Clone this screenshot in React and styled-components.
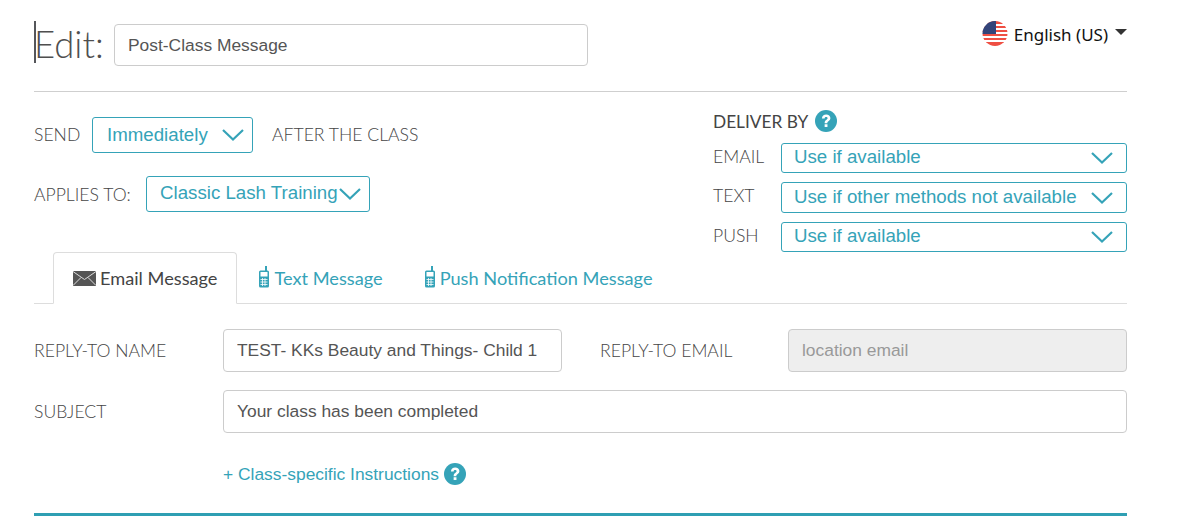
import React from 'react';
import styled, { createGlobalStyle } from 'styled-components';

const teal = '#35a3b8';

const GlobalStyle = createGlobalStyle`
  html, body {
    margin: 0;
    padding: 0;
    background: #fff;
  }
  * {
    box-sizing: border-box;
  }
`;

const Page = styled.div`
    width: 1188px;
    height: 516px;
    overflow: hidden;
    padding: 0 61px 0 34px;
    font-family: 'Lato', 'Liberation Sans', sans-serif;
    color: #4d4d4d;
  `,
  Header = styled.div`
    display: flex;
    justify-content: space-between;
    height: 92px;
    padding-top: 24px;
    border-bottom: 1px solid #cfcfcf;
  `,
  TitleGroup = styled.div`
    display: flex;
    align-items: flex-start;
  `,
  Title = styled.h1`
    width: 80px;
    height: 42px;
    margin: -3px 0 0;
    font-size: 36.5px;
    font-weight: 300;
    line-height: 46px;
    color: #4f4f4f;
    box-shadow: inset 2px 0 0 #55565a;
  `,
  TextInput = styled.input`
    display: block;
    width: ${p => p.$width};
    height: ${p => p.$height || '43px'};
    padding: 0 13px;
    border: 1px solid #cccccc;
    border-radius: 4px;
    background: ${p => (p.disabled ? '#eeeeee' : '#fff')};
    font-family: 'Liberation Sans', Arial, sans-serif;
    font-size: 17.4px;
    color: #555555;
    outline: none;
    &::placeholder {
      color: #999999;
      opacity: 1;
    }
  `,
  LangPicker = styled.div`
    display: flex;
    align-items: center;
    height: 24px;
    margin-top: -3px;
    font-family: 'Noto Sans', sans-serif;
    font-size: 17px;
    color: #111;
  `,
  LangText = styled.span`
    margin: 2px 0 0 6px;
  `,
  Caret = styled.span`
    width: 0;
    height: 0;
    margin: -2px 0 0 7px;
    border-left: 6px solid transparent;
    border-right: 6px solid transparent;
    border-top: 6px solid #333;
  `,
  Settings = styled.div`
    display: flex;
    justify-content: space-between;
    height: 160px;
  `,
  SendColumn = styled.div`
    display: flex;
    flex-direction: column;
    gap: 23px;
    padding-top: 25px;
  `,
  InlineRow = styled.div`
    display: flex;
    align-items: center;
  `,
  Label = styled.span`
    width: ${p => p.$width || 'auto'};
    margin-left: ${p => p.$left || 0};
    padding-bottom: ${p => p.$lift || '2px'};
    flex: none;
    font-size: 17.6px;
    font-weight: 300;
    color: #454545;
    white-space: nowrap;
  `,
  SelectBox = styled.div`
    display: flex;
    align-items: center;
    justify-content: space-between;
    width: ${p => p.$width};
    height: ${p => p.$height};
    padding: 0 ${p => p.$right || '7px'} 0 ${p => p.$left || '12px'};
    border: 1px solid ${teal};
    border-radius: 3px;
    font-family: 'Liberation Sans', Arial, sans-serif;
    font-size: 18.7px;
    color: ${teal};
    white-space: nowrap;
  `,
  SelectText = styled.span`
    margin-bottom: ${p => p.$lift || 0};
  `,
  DeliverColumn = styled.div`
    width: 414px;
    padding-top: 17px;
  `,
  DeliverTitle = styled.div`
    display: flex;
    align-items: center;
    gap: 7px;
    height: 24px;
    margin-bottom: 10px;
    font-size: 17.3px;
    font-weight: 400;
    color: #444;
  `,
  DeliverRows = styled.div`
    display: flex;
    flex-direction: column;
    gap: 9px;
  `,
  DeliverRow = styled.div`
    display: flex;
    align-items: center;
  `,
  TabBar = styled.div`
    display: flex;
    align-items: flex-start;
    height: 52px;
    padding-left: 19px;
    border-bottom: 1px solid #dddddd;
  `,
  Tab = styled.div`
    display: flex;
    align-items: center;
    height: ${p => (p.$active ? '52px' : '51px')};
    padding: 0 19px 0 ${p => (p.$active ? '19px' : '20px')};
    border: 1px solid ${p => (p.$active ? '#dddddd' : 'transparent')};
    border-bottom: 1px solid ${p => (p.$active ? '#fff' : 'transparent')};
    border-radius: 4px 4px 0 0;
    background: #fff;
    font-size: 18.2px;
    font-weight: 400;
    color: ${p => (p.$active ? '#444' : teal)};
    white-space: nowrap;
  `,
  TabIcon = styled.svg`
    flex: none;
    margin: ${p => p.$top || 0} 4px 0 0;
  `,
  Form = styled.div`
    display: flex;
    flex-direction: column;
    gap: 18px;
    padding-top: 25px;
  `,
  FormRow = styled.div`
    display: flex;
    align-items: center;
  `,
  LinkRow = styled.div`
    display: flex;
    align-items: center;
    gap: 5px;
    height: 22px;
    margin: 30px 0 0 189px;
    font-family: 'Liberation Sans', Arial, sans-serif;
    font-size: 17.4px;
    color: ${teal};
  `,
  BottomRule = styled.div`
    height: 3px;
    margin-top: 28px;
    background: #2f9fb3;
  `;

const Chevron = () => (
  <svg width="24" height="14" viewBox="0 0 24 14" fill="none">
    <path d="M2 2 L12 11.5 L22 2" stroke={teal} strokeWidth="2.2" />
  </svg>
);

const Help = () => (
  <svg width="22" height="22" viewBox="0 0 21 21">
    <circle cx="10.5" cy="10.5" r="10.5" fill={teal} />
    <path
      d="M6.6 8 C6.7 5.7 8.4 4.2 10.7 4.2 C13 4.2 14.7 5.6 14.7 7.7 C14.7 9.2 13.9 10 12.8 10.7 C12 11.2 11.8 11.6 11.8 12.6 L9.2 12.6 C9.2 11 9.6 10.2 10.7 9.5 C11.5 8.9 12 8.5 12 7.9 C12 7.1 11.5 6.7 10.7 6.7 C9.8 6.7 9.3 7.2 9.2 8 Z"
      fill="#fff"
    />
    <rect x="9.2" y="13.6" width="2.7" height="2.6" fill="#fff" />
  </svg>
);

const Flag = () => (
  <svg width="26" height="25" viewBox="0 0 26 25">
    <defs>
      <clipPath id="flagClip">
        <circle cx="13" cy="12.5" r="12.5" />
      </clipPath>
    </defs>
    <g clipPath="url(#flagClip)">
      <rect width="26" height="25" fill="#fff" />
      <rect y="0" width="26" height="3" fill="#ef4f43" />
      <rect y="5" width="26" height="2" fill="#ef4f43" />
      <rect y="9" width="26" height="2" fill="#ef4f43" />
      <rect y="13" width="26" height="2" fill="#ef4f43" />
      <rect y="17" width="26" height="2" fill="#ef4f43" />
      <rect y="21" width="26" height="4" fill="#ef4f43" />
      <rect width="14" height="13" fill="#33447a" />
    </g>
  </svg>
);

const Envelope = () => (
  <TabIcon width="23" height="15" viewBox="0 0 23 15">
    <rect width="23" height="15" fill="#555" />
    <path d="M0 0.5 L11.5 8.5 L23 0.5 M0 14.5 L8 6.5 M23 14.5 L15 6.5" stroke="#ddd" strokeWidth="1" fill="none" />
  </TabIcon>
);

const Phone = () => (
  <TabIcon $top="-2px" width="12" height="22" viewBox="0 0 12 22">
    <rect x="7" y="0" width="2" height="5" fill={teal} />
    <rect x="1" y="4.5" width="10" height="17" rx="1.5" fill={teal} />
    <rect x="2.5" y="6" width="7" height="4.5" fill="#fff" />
    <path d="M2.5 13.5 H9.5 M2.5 16 H9.5 M2.5 18.5 H9.5" stroke="#fff" strokeWidth="0.8" />
    <path d="M4.5 12 V20 M7 12 V20" stroke="#fff" strokeWidth="0.8" />
  </TabIcon>
);

const deliverRows = [
  { label: 'EMAIL', value: 'Use if available', height: '30px' },
  { label: 'TEXT', value: 'Use if other methods not available', height: '31px' },
  { label: 'PUSH', value: 'Use if available', height: '30px' }
];

const App = () => (
  <Page>
    <GlobalStyle />
    <Header>
      <TitleGroup>
        <Title>Edit:</Title>
        <TextInput $width="474px" $height="42px" defaultValue="Post-Class Message" />
      </TitleGroup>
      <LangPicker>
        <Flag />
        <LangText>English (US)</LangText>
        <Caret />
      </LangPicker>
    </Header>

    <Settings>
      <SendColumn>
        <InlineRow>
          <Label $width="58px">SEND</Label>
          <SelectBox $width="161px" $height="36px" $left="14px" $right="7px">
            <SelectText>Immediately</SelectText>
            <Chevron />
          </SelectBox>
          <Label $left="19px">AFTER THE CLASS</Label>
        </InlineRow>
        <InlineRow>
          <Label $width="112px" $lift="0">APPLIES TO:</Label>
          <SelectBox $width="224px" $height="36px" $left="13px" $right="7px">
            <SelectText $lift="2px">Classic Lash Training</SelectText>
            <Chevron />
          </SelectBox>
        </InlineRow>
      </SendColumn>

      <DeliverColumn>
        <DeliverTitle>
          DELIVER BY <Help />
        </DeliverTitle>
        <DeliverRows>
          {deliverRows.map(row => (
            <DeliverRow key={row.label}>
              <Label $width="68px" $lift="4px">{row.label}</Label>
              <SelectBox $width="346px" $height={row.height} $left="12px" $right="12px">
                <SelectText $lift="2px">{row.value}</SelectText>
                <Chevron />
              </SelectBox>
            </DeliverRow>
          ))}
        </DeliverRows>
      </DeliverColumn>
    </Settings>

    <TabBar>
      <Tab $active>
        <Envelope /> Email Message
      </Tab>
      <Tab>
        <Phone /> Text Message
      </Tab>
      <Tab>
        <Phone /> Push Notification Message
      </Tab>
    </TabBar>

    <Form>
      <FormRow>
        <Label $width="189px" $lift="0">REPLY-TO NAME</Label>
        <TextInput $width="339px" defaultValue="TEST- KKs Beauty and Things- Child 1" />
        <Label $width="188px" $left="38px" $lift="0">REPLY-TO EMAIL</Label>
        <TextInput $width="339px" disabled placeholder="location email" />
      </FormRow>
      <FormRow>
        <Label $width="189px" $lift="0">SUBJECT</Label>
        <TextInput $width="904px" defaultValue="Your class has been completed" />
      </FormRow>
    </Form>

    <LinkRow>
      + Class-specific Instructions <Help />
    </LinkRow>
    <BottomRule />
  </Page>
);

export default App;
